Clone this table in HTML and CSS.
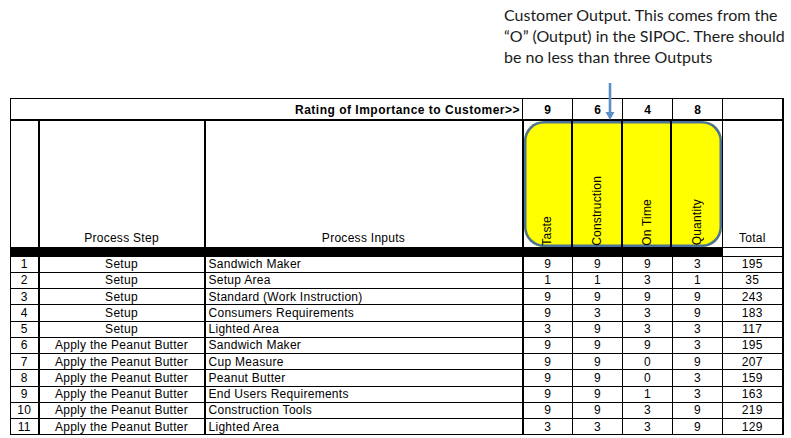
FILE: index.html
```html
<!DOCTYPE html>
<html>
<head>
<meta charset="utf-8">
<link rel="stylesheet" href="styles.css">
</head>
<body>
<div class="page">
  <div class="note">Customer Output. This comes from the<br>“O” (Output) in the SIPOC. There should<br>be no less than three Outputs</div>
  <div class="sheet">
    <svg class="arrow" viewBox="0 0 14 38" width="14" height="38">
      <line x1="7" y1="0" x2="7" y2="30" stroke="#5b8fc9" stroke-width="2.6"/>
      <polygon points="2.5,29 11.5,29 7,37" fill="#5b8fc9"/>
    </svg>
    <table class="grid">
      <colgroup>
        <col class="w-num"><col class="w-step"><col class="w-input">
        <col class="w-out"><col class="w-out"><col class="w-out"><col class="w-out">
        <col class="w-total">
      </colgroup>
      <tr class="rating">
        <th colspan="3" class="rating-label">Rating of Importance to Customer&gt;&gt;</th>
        <th>9</th><th>6</th><th>4</th><th>8</th><th></th>
      </tr>
      <tr class="heads">
        <th class="c-num"></th>
        <th class="c-step">Process Step</th>
        <th class="c-input">Process Inputs</th>
        <th colspan="4" class="outputs-cell">
          <div class="outputs">
            <div class="out"><span class="vtext">Taste</span></div>
            <div class="out"><span class="vtext">Construction</span></div>
            <div class="out"><span class="vtext">On Time</span></div>
            <div class="out"><span class="vtext">Quantity</span></div>
          </div>
        </th>
        <th class="c-total">Total</th>
      </tr>
      <tr class="bar">
        <td colspan="7" class="bar-fill"></td>
        <td class="bar-gap"></td>
      </tr>
      <tr class="row"><td class="c-num">1</td><td class="c-step">Setup</td><td class="c-input">Sandwich Maker</td><td>9</td><td>9</td><td>9</td><td>3</td><td class="c-total">195</td></tr>
      <tr class="row"><td class="c-num">2</td><td class="c-step">Setup</td><td class="c-input">Setup Area</td><td>1</td><td>1</td><td>3</td><td>1</td><td class="c-total">35</td></tr>
      <tr class="row"><td class="c-num">3</td><td class="c-step">Setup</td><td class="c-input">Standard (Work Instruction)</td><td>9</td><td>9</td><td>9</td><td>9</td><td class="c-total">243</td></tr>
      <tr class="row"><td class="c-num">4</td><td class="c-step">Setup</td><td class="c-input">Consumers Requirements</td><td>9</td><td>3</td><td>3</td><td>9</td><td class="c-total">183</td></tr>
      <tr class="row"><td class="c-num">5</td><td class="c-step">Setup</td><td class="c-input">Lighted Area</td><td>3</td><td>9</td><td>3</td><td>3</td><td class="c-total">117</td></tr>
      <tr class="row"><td class="c-num">6</td><td class="c-step">Apply the Peanut Butter</td><td class="c-input">Sandwich Maker</td><td>9</td><td>9</td><td>9</td><td>3</td><td class="c-total">195</td></tr>
      <tr class="row"><td class="c-num">7</td><td class="c-step">Apply the Peanut Butter</td><td class="c-input">Cup Measure</td><td>9</td><td>9</td><td>0</td><td>9</td><td class="c-total">207</td></tr>
      <tr class="row"><td class="c-num">8</td><td class="c-step">Apply the Peanut Butter</td><td class="c-input">Peanut Butter</td><td>9</td><td>9</td><td>0</td><td>3</td><td class="c-total">159</td></tr>
      <tr class="row"><td class="c-num">9</td><td class="c-step">Apply the Peanut Butter</td><td class="c-input">End Users Requirements</td><td>9</td><td>9</td><td>1</td><td>3</td><td class="c-total">163</td></tr>
      <tr class="row"><td class="c-num">10</td><td class="c-step">Apply the Peanut Butter</td><td class="c-input">Construction Tools</td><td>9</td><td>9</td><td>3</td><td>9</td><td class="c-total">219</td></tr>
      <tr class="row"><td class="c-num">11</td><td class="c-step">Apply the Peanut Butter</td><td class="c-input">Lighted Area</td><td>3</td><td>3</td><td>3</td><td>9</td><td class="c-total">129</td></tr>
    </table>
  </div>
</div>
</body>
</html>
```
FILE: styles.css
```css
* { box-sizing: border-box; }
html, body { margin: 0; padding: 0; background: #fff; }
body {
  width: 791px;
  height: 438px;
  overflow: hidden;
  font-family: "Liberation Sans", Arial, sans-serif;
  color: #000;
}
.page { position: relative; }
.note {
  height: 98px;
  margin-left: 504px;
  padding-top: 4px;
  font-family: Lato, "Open Sans", sans-serif;
  font-size: 16px;
  line-height: 21px;
  color: #1c1c1c;
}
.sheet {
  position: relative;
  margin-left: 10px;
  width: 772px;
}
.arrow {
  position: absolute;
  left: 593px;
  top: -15px;
  z-index: 2;
}
.grid {
  border-collapse: collapse;
  table-layout: fixed;
  width: 772px;
  font-size: 12px;
  letter-spacing: 0.28px;
  border: 1px solid #000;
  border-right: 2px solid #000;
}
.w-num { width: 28px; }
.w-step { width: 166px; }
.w-input { width: 318px; }
.w-out { width: 50px; }
.w-total { width: 60px; }
.grid td, .grid th {
  padding: 0;
  border: 1px solid #000;
  text-align: center;
  white-space: nowrap;
  overflow: hidden;
}
.grid .rating th {
  height: 21px;
  padding-top: 2px;
  font-weight: bold;
  font-size: 12px;
  letter-spacing: 0.1px;
  border-bottom: 2px solid #000;
}
.grid .rating .rating-label {
  text-align: right;
  padding-right: 2px;
  letter-spacing: 0.5px;
}
.grid .heads th {
  height: 126px;
  font-weight: normal;
  vertical-align: bottom;
  padding-bottom: 2px;
}
.grid .heads .c-num, .grid .heads .c-step, .grid .heads .c-input { border-right: 2px solid #000; }
.grid .heads .outputs-cell {
  padding: 0;
  border-bottom: 0;
  vertical-align: top;
}
.outputs {
  display: grid;
  grid-template-columns: repeat(4, 1fr);
  height: 126px;
  background: #ffff00;
  border-radius: 20px;
  box-shadow: inset 0 0 0 2.5px #4d7299;
  overflow: hidden;
}
.out {
  display: flex;
  align-items: flex-end;
  justify-content: center;
  padding-bottom: 1px;
  border-right: 2px solid #000;
}
.out:last-child { border-right: 0; }
.vtext {
  writing-mode: vertical-rl;
  transform: rotate(180deg);
  font-size: 12px;
  letter-spacing: 0.2px;
}
.grid .bar td { height: 9px; }
.grid .bar .bar-fill { background: #000; }
.grid .bar .bar-gap { background: #fff; }
.grid .row td { height: 16.25px; line-height: 14px; }
.grid .c-num { border-right: 2px solid #000; }
.grid .c-step { border-right: 2px solid #000; }
.grid td.c-input {
  border-right: 2px solid #000;
  text-align: left;
  padding-left: 3px;
}
```
